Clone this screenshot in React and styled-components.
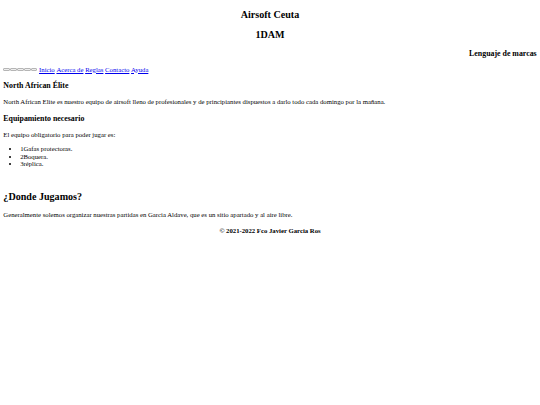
import React from "react";
import styled, { createGlobalStyle } from "styled-components";

const Global = createGlobalStyle`
  html, body { background: #fff; }
  body {
    margin: 0 3.36px 3.36px;
    font-family: "Liberation Serif", "Times New Roman", serif;
    font-size: 6.72px;
    line-height: 1.15;
    color: #000;
  }
`;

const Header = styled.header`
  display: block;
  padding-top: 8.9px;
`;

const Title = styled.h2`
  font-size: 10.08px;
  font-weight: bold;
  text-align: ${(p) => (p.$left ? "left" : "center")};
  margin: ${(p) => (p.$first ? "0 0 8.37px" : "8.37px 0")};
`;

const Subject = styled.h3`
  font-size: 7.86px;
  font-weight: bold;
  text-align: right;
  margin: 7.86px 0;
`;

const Nav = styled.nav`
  display: flex;
  align-items: center;
  gap: 1.7px;
  height: 7.7px;
`;

const Thumbs = styled.span`
  display: flex;
  align-items: center;
`;

const Thumb = styled.span`
  display: inline-block;
  width: 4.8px;
  height: 1.4px;
  border: 0.5px solid #b5b5b5;
  border-radius: 1px;
  background: #eeeeee;
`;

const NavLink = styled.a`
  color: #0000ee;
  text-decoration: underline;
`;

const SectionTitle = styled.h3`
  font-size: 7.86px;
  font-weight: bold;
  margin: 7.86px 0;
`;

const Para = styled.p`
  margin: 6.72px 0;
`;

const List = styled.ul`
  margin: 6.72px 0;
  padding-left: 16.8px;
`;

const Spacer = styled.div`
  height: 7.5px;
`;

const Footer = styled.footer`
  text-align: center;
  font-weight: bold;
  margin-top: 8.2px;
`;

const links = ["Inicio", "Acerca de", "Reglas", "Contacto", "Ayuda"];

export default function App() {
  return (
    <>
      <Global />
      <Header>
        <Title $first>Airsoft Ceuta</Title>
        <Title>1DAM</Title>
        <Subject>Lenguaje de marcas</Subject>
      </Header>
      <Nav>
        <Thumbs>
          {[0, 1, 2, 3, 4].map((i) => (
            <Thumb key={i} />
          ))}
        </Thumbs>
        {links.map((l) => (
          <NavLink key={l} href="#">
            {l}
          </NavLink>
        ))}
      </Nav>
      <main>
        <SectionTitle>North African Élite</SectionTitle>
        <Para>
          North African Elite es nuestro equipo de airsoft lleno de profesionales y de
          principiantes dispuestos a darlo todo cada domingo por la mañana.
        </Para>
        <SectionTitle>Equipamiento necesario</SectionTitle>
        <Para>El equipo obligatorio para poder jugar es:</Para>
        <List>
          <li>1Gafas protectoras.</li>
          <li>2Boquera.</li>
          <li>3réplica.</li>
        </List>
        <Spacer />
        <Title $left>¿Donde Jugamos?</Title>
        <Para>
          Generalmente solemos organizar nuestras partidas en Garcia Aldave, que es un
          sitio apartado y al aire libre.
        </Para>
      </main>
      <Footer>© 2021-2022 Fco Javier Garcia Ros</Footer>
    </>
  );
}
